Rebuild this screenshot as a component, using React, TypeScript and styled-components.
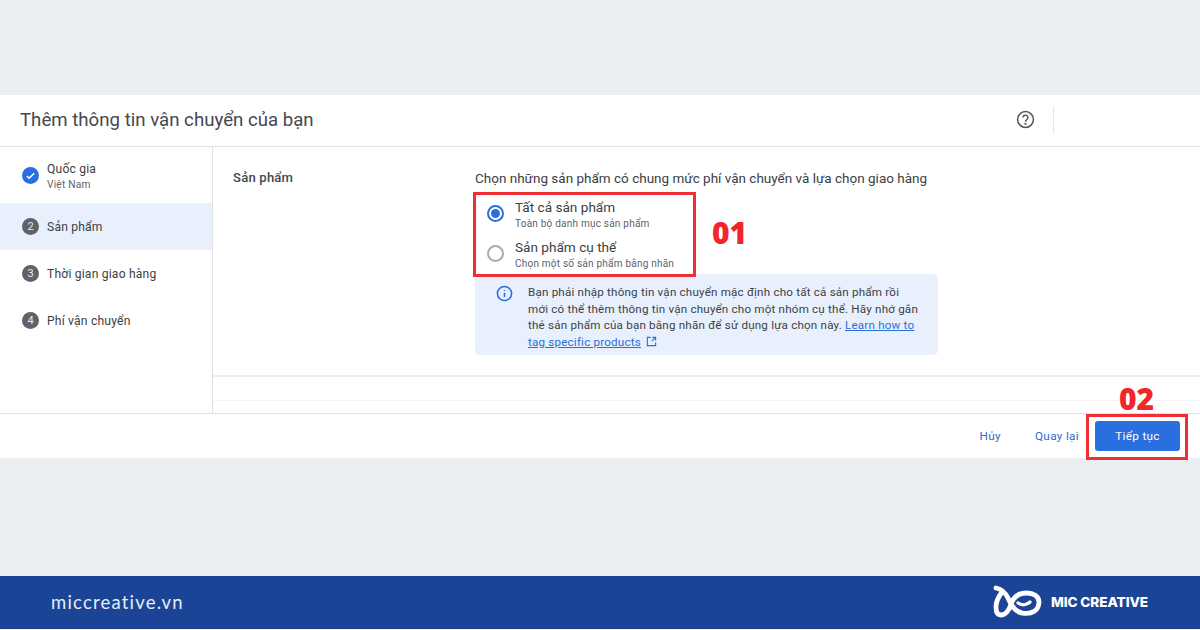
import React from "react";
import styled, { createGlobalStyle } from "styled-components";

const Global = createGlobalStyle`
  html, body { margin: 0; padding: 0; background: #ebeff2; }
  body { font-family: Roboto, "Liberation Sans", sans-serif; width: 1200px; height: 630px; overflow: hidden; }
  * { box-sizing: border-box; }
`;

const Page = styled.div`
  width: 1200px;
  height: 630px;
  display: flex;
  flex-direction: column;
  position: relative;
  overflow: hidden;
  background: #ebeff2;
  padding-top: 95px;
`;
const Panel = styled.section`
  height: 363px;
  background: #fff;
  display: flex;
  flex-direction: column;
`;
const Header = styled.header`
  height: 52px;
  flex: none;
  display: flex;
  align-items: center;
  justify-content: space-between;
  padding: 0 146px 2px 20px;
  border-bottom: 1px solid #dfe1e4;
`;
const Title = styled.h1`
  margin: 0;
  font-size: 18.65px;
  font-weight: 400;
  color: #45484c;
`;
const HeaderTools = styled.div`
  display: flex;
  align-items: center;
  gap: 18px;
`;
const ToolDivider = styled.span`
  width: 1px;
  height: 28px;
  background: #e6e7e9;
`;
const Body = styled.div`
  flex: 1;
  display: flex;
  min-height: 0;
`;
const Sidebar = styled.nav`
  width: 213px;
  flex: none;
  border-right: 1px solid #dfe1e4;
`;
const Step = styled.div<{ $active?: boolean; $tall?: boolean }>`
  height: ${(p) => (p.$tall ? "56px" : "47px")};
  display: flex;
  align-items: center;
  gap: 8px;
  padding-left: 22px;
  background: ${(p) => (p.$active ? "#e8f0fe" : "transparent")};
`;
const StepNumber = styled.span`
  width: 17px;
  height: 17px;
  border-radius: 50%;
  background: #5f6368;
  color: #e8eaed;
  font-size: 11px;
  display: flex;
  align-items: center;
  justify-content: center;
  flex: none;
`;
const StepDone = styled(StepNumber)`
  background: #2a6fe0;
`;
const StepText = styled.div`
  display: flex;
  flex-direction: column;
  padding-top: 3px;
`;
const StepLabel = styled.span`
  font-size: 12.1px;
  line-height: 16px;
  color: #3c4043;
  letter-spacing: 0.2px;
`;
const StepSub = styled.span`
  font-size: 10.2px;
  line-height: 16px;
  color: #5f6368;
  letter-spacing: 0.2px;
`;
const Main = styled.main`
  flex: 1;
  display: flex;
  flex-direction: column;
`;
const Section = styled.div`
  height: 230px;
  flex: none;
  display: grid;
  grid-template-columns: 242px 1fr;
  padding: 21px 0 0 20px;
  border-bottom: 2px solid #eceef0;
`;
const SectionLabel = styled.div`
  font-size: 13.1px;
  line-height: 20px;
  font-weight: 500;
  color: #44474b;
  letter-spacing: 0.2px;
`;
const Content = styled.div`
  display: flex;
  flex-direction: column;
`;
const Prompt = styled.div`
  font-size: 13.5px;
  line-height: 20px;
  color: #3c4043;
  margin-bottom: 5px;
`;
const Option = styled.div`
  height: 40px;
  display: flex;
  align-items: center;
  gap: 11px;
  padding-left: 12px;
`;
const Radio = styled.span<{ $on?: boolean }>`
  width: 17px;
  height: 17px;
  border-radius: 50%;
  border: 2px solid ${(p) => (p.$on ? "#2a6fe0" : "#a9abae")};
  flex: none;
  display: flex;
  align-items: center;
  justify-content: center;
  &::after {
    content: "";
    width: 9px;
    height: 9px;
    border-radius: 50%;
    background: ${(p) => (p.$on ? "#2a6fe0" : "transparent")};
  }
`;
const OptionText = styled.div`
  display: flex;
  flex-direction: column;
  padding-top: 3px;
`;
const OptionLabel = styled.span`
  font-size: 13.6px;
  line-height: 17px;
  color: #3c4043;
`;
const OptionSub = styled.span`
  font-size: 10.05px;
  line-height: 15px;
  color: #5f6368;
  letter-spacing: 0.2px;
`;
const Notice = styled.div`
  width: 463px;
  height: 81px;
  margin-top: 1px;
  background: #e8f0fe;
  border-radius: 5px;
  display: flex;
  gap: 15px;
  padding: 10px 8px 0 21px;
`;
const NoticeText = styled.p`
  margin: 0;
  font-size: 11.62px;
  line-height: 16.5px;
  color: #3c4043;
  letter-spacing: 0.2px;
  white-space: nowrap;
`;
const Link = styled.a`
  color: #2a6fd6;
  text-decoration: underline;
`;
const Faint = styled.div`
  height: 24px;
  flex: none;
  border-bottom: 1px solid #f3f4f5;
`;
const Actions = styled.footer`
  height: 45px;
  flex: none;
  border-top: 1px solid #dfe1e4;
  display: flex;
  align-items: center;
  justify-content: flex-end;
  padding-right: 20px;
`;
const TextButton = styled.span<{ $gap: number }>`
  font-size: 11.7px;
  font-weight: 400;
  color: #2f6ad2;
  margin-right: ${(p) => p.$gap}px;
  letter-spacing: 0.35px;
`;
const Primary = styled.button`
  width: 85px;
  height: 30px;
  border: 0;
  border-radius: 3px;
  background: #2a6fe0;
  color: #fff;
  font-family: inherit;
  font-size: 11.7px;
  font-weight: 400;
  letter-spacing: 0.35px;
`;
const RedBox = styled.div<{ $x: number; $y: number; $w: number; $h: number }>`
  position: absolute;
  left: ${(p) => p.$x}px;
  top: ${(p) => p.$y}px;
  width: ${(p) => p.$w}px;
  height: ${(p) => p.$h}px;
  border: 3px solid #ee2f36;
  pointer-events: none;
`;
const RedLabel = styled.div<{ $x: number; $y: number }>`
  position: absolute;
  left: ${(p) => p.$x}px;
  top: ${(p) => p.$y}px;
  font-family: "Open Sans", sans-serif;
  font-size: 30px;
  line-height: 30px;
  font-weight: 800;
  color: #f0262c;
`;
const Spacer = styled.div`
  flex: 1;
`;
const Brand = styled.footer`
  height: 53px;
  flex: none;
  margin-bottom: 1px;
  background: #1b4496;
  display: flex;
  align-items: center;
  justify-content: space-between;
  padding: 0 52px 2px 51px;
`;
const Site = styled.span`
  font-family: Lato, sans-serif;
  font-size: 18.5px;
  color: #e6ecf7;
  letter-spacing: 1.2px;
`;
const Logo = styled.div`
  display: flex;
  align-items: center;
  gap: 3px;
`;
const LogoText = styled.span`
  font-family: Inter, sans-serif;
  font-weight: 800;
  font-size: 13.6px;
  color: #fff;
  letter-spacing: -0.1px;
`;

const Check = () => (
  <svg width="11" height="11" viewBox="0 0 24 24" fill="none" stroke="#fff" strokeWidth="3.4">
    <path d="M4 13l5 5L20 7" />
  </svg>
);

export default function App() {
  return (
    <Page>
      <Global />
      <Panel>
        <Header>
          <Title>Thêm thông tin vận chuyển của bạn</Title>
          <HeaderTools>
            <svg width="19" height="19" viewBox="0 0 24 24" fill="none" stroke="#55585c" strokeWidth="1.9">
              <circle cx="12" cy="12" r="10" />
              <path d="M9 9.5a3 3 0 1 1 4.7 2.5c-1.1.8-1.7 1.4-1.7 2.8" />
              <circle cx="12" cy="17.6" r="0.5" fill="#55585c" />
            </svg>
            <ToolDivider />
          </HeaderTools>
        </Header>
        <Body>
          <Sidebar>
            <Step $tall>
              <StepDone><Check /></StepDone>
              <StepText>
                <StepLabel>Quốc gia</StepLabel>
                <StepSub>Việt Nam</StepSub>
              </StepText>
            </Step>
            <Step $active>
              <StepNumber>2</StepNumber>
              <StepLabel>Sản phẩm</StepLabel>
            </Step>
            <Step>
              <StepNumber>3</StepNumber>
              <StepLabel>Thời gian giao hàng</StepLabel>
            </Step>
            <Step>
              <StepNumber>4</StepNumber>
              <StepLabel>Phí vận chuyển</StepLabel>
            </Step>
          </Sidebar>
          <Main>
            <Section>
              <SectionLabel>Sản phẩm</SectionLabel>
              <Content>
                <Prompt>Chọn những sản phẩm có chung mức phí vận chuyển và lựa chọn giao hàng</Prompt>
                <Option>
                  <Radio $on />
                  <OptionText>
                    <OptionLabel>Tất cả sản phẩm</OptionLabel>
                    <OptionSub>Toàn bộ danh mục sản phẩm</OptionSub>
                  </OptionText>
                </Option>
                <Option>
                  <Radio />
                  <OptionText>
                    <OptionLabel>Sản phẩm cụ thể</OptionLabel>
                    <OptionSub>Chọn một số sản phẩm bằng nhãn</OptionSub>
                  </OptionText>
                </Option>
                <Notice>
                  <svg width="17" height="17" viewBox="0 0 24 24" fill="none" stroke="#2a6fd6" strokeWidth="2.2" style={{ flex: "none", marginTop: 1 }}>
                    <circle cx="12" cy="12" r="10" />
                    <path d="M12 11v6M12 7v1.6" />
                  </svg>
                  <NoticeText>
                    Bạn phải nhập thông tin vận chuyển mặc định cho tất cả sản phẩm rồi
                    <br />
                    mới có thể thêm thông tin vận chuyển cho một nhóm cụ thể. Hãy nhớ gắn
                    <br />
                    thẻ sản phẩm của bạn bằng nhãn để sử dụng lựa chọn này.{" "}
                    <Link>
                      Learn how to
                      <br />
                      tag specific products
                    </Link>{" "}
                    <svg width="11" height="11" viewBox="0 0 24 24" fill="none" stroke="#2a6fd6" strokeWidth="2.4" style={{ verticalAlign: -1, marginLeft: 2 }}>
                      <path d="M10 3H3v18h18v-7M13 11l8-8M14 3h7v7" />
                    </svg>
                  </NoticeText>
                </Notice>
              </Content>
            </Section>
            <Faint />
          </Main>
        </Body>
        <Actions>
          <TextButton $gap={34}>Hủy</TextButton>
          <TextButton $gap={16}>Quay lại</TextButton>
          <Primary>Tiếp tục</Primary>
        </Actions>
      </Panel>
      <Spacer />
      <Brand>
        <Site>miccreative.vn</Site>
        <Logo>
          <svg width="60" height="40" viewBox="0 0 60 40" fill="none" stroke="#fff" strokeLinecap="round">
            <path d="M8 6C14 7 17 10 20 16C23 23 27 30 34 31C44 33 51 28 51 20C51 14 45 11 39 11C30 11 25 16 23 22C21 29 17 33 13 33C9 33 8 29 8 25C8 19 11 14 14 10" strokeWidth="4.8" />
            <path d="M30 21C34 24 39 23 42 20" strokeWidth="3.2" />
          </svg>
          <LogoText>MIC CREATIVE</LogoText>
        </Logo>
      </Brand>
      <RedBox $x={473} $y={192} $w={223} $h={85} />
      <RedBox $x={1086} $y={414} $w={102} $h={46} />
      <RedLabel $x={712} $y={218}>01</RedLabel>
      <RedLabel $x={1119} $y={384}>02</RedLabel>
    </Page>
  );
}
